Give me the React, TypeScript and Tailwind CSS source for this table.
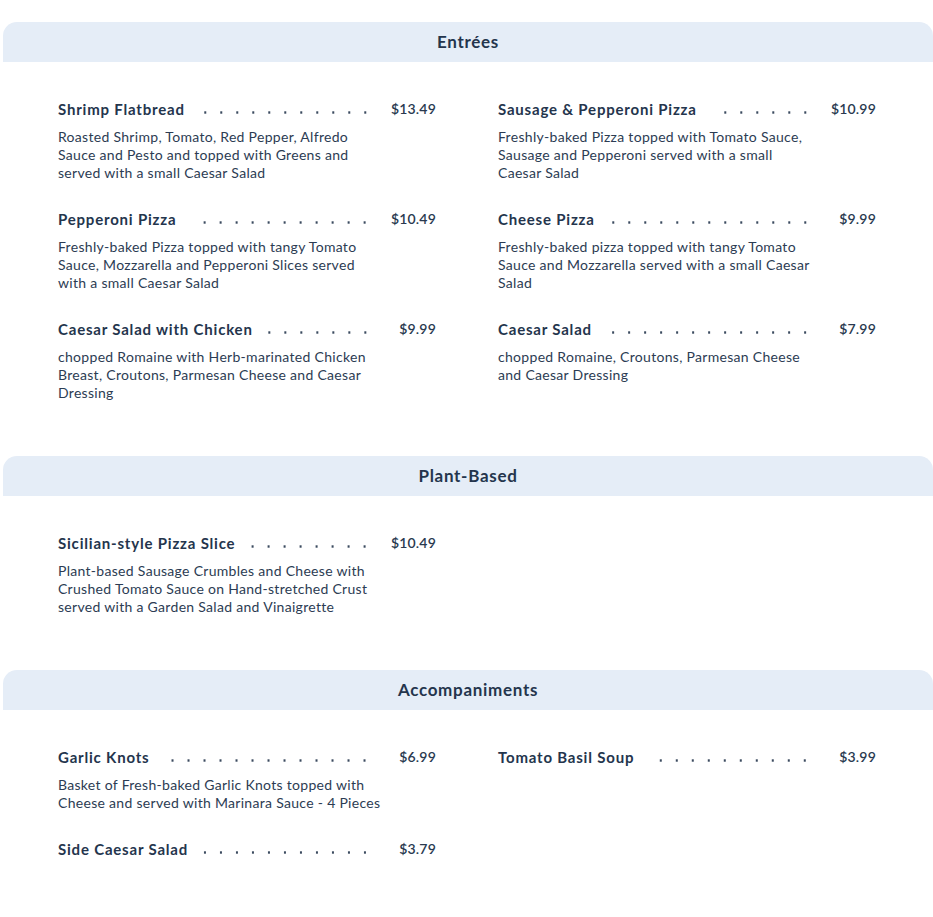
type Item = { name: string; price: string; desc?: string };
type Section = { title: string; items: Item[] };

// line breaks follow the printed menu
const sections: Section[] = [
  {
    title: 'Entrées',
    items: [
      {
        name: 'Shrimp Flatbread',
        price: '$13.49',
        desc: 'Roasted Shrimp, Tomato, Red Pepper, Alfredo\nSauce and Pesto and topped with Greens and\nserved with a small Caesar Salad',
      },
      {
        name: 'Sausage & Pepperoni Pizza',
        price: '$10.99',
        desc: 'Freshly-baked Pizza topped with Tomato Sauce,\nSausage and Pepperoni served with a small\nCaesar Salad',
      },
      {
        name: 'Pepperoni Pizza',
        price: '$10.49',
        desc: 'Freshly-baked Pizza topped with tangy Tomato\nSauce, Mozzarella and Pepperoni Slices served\nwith a small Caesar Salad',
      },
      {
        name: 'Cheese Pizza',
        price: '$9.99',
        desc: 'Freshly-baked pizza topped with tangy Tomato\nSauce and Mozzarella served with a small Caesar\nSalad',
      },
      {
        name: 'Caesar Salad with Chicken',
        price: '$9.99',
        desc: 'chopped Romaine with Herb-marinated Chicken\nBreast, Croutons, Parmesan Cheese and Caesar\nDressing',
      },
      {
        name: 'Caesar Salad',
        price: '$7.99',
        desc: 'chopped Romaine, Croutons, Parmesan Cheese\nand Caesar Dressing',
      },
    ],
  },
  {
    title: 'Plant-Based',
    items: [
      {
        name: 'Sicilian-style Pizza Slice',
        price: '$10.49',
        desc: 'Plant-based Sausage Crumbles and Cheese with\nCrushed Tomato Sauce on Hand-stretched Crust\nserved with a Garden Salad and Vinaigrette',
      },
    ],
  },
  {
    title: 'Accompaniments',
    items: [
      {
        name: 'Garlic Knots',
        price: '$6.99',
        desc: 'Basket of Fresh-baked Garlic Knots topped with\nCheese and served with Marinara Sauce - 4 Pieces',
      },
      { name: 'Tomato Basil Soup', price: '$3.99' },
      { name: 'Side Caesar Salad', price: '$3.79' },
    ],
  },
];

function MenuItem({ item }: { item: Item }) {
  return (
    <div>
      <div className="flex items-end">
        <span className="text-[15px] leading-[22px] font-bold tracking-[0.8px] text-[#24354d]">
          {item.name}
        </span>
        <span className="flex-1 ml-[14px] mb-[6px] h-[3px] bg-[radial-gradient(circle,#3b4a5f_1px,transparent_1.4px)] bg-[length:16px_3px] bg-repeat-x bg-right" />
        <span className="w-[63px] shrink-0 text-right text-[14px] leading-[22px] font-semibold tracking-[0.2px] text-[#2a3a50]">
          {item.price}
        </span>
      </div>
      {item.desc && (
        <p className="mt-[8px] whitespace-pre-line text-[14px] leading-[18px] tracking-[0.3px] text-[#2c3c53]">
          {item.desc}
        </p>
      )}
    </div>
  );
}

export default function App() {
  return (
    <div className="w-[933px] bg-white pt-[22px] font-['Lato',sans-serif]">
      {sections.map((s) => (
        <section key={s.title}>
          <div className="ml-[3px] h-[40px] flex items-center justify-center rounded-t-[14px] bg-[#e5edf7]">
            <h2 className="text-[17px] font-bold tracking-[0.7px] text-[#24354d]">{s.title}</h2>
          </div>
          <div className="grid grid-cols-2 gap-x-[62px] gap-y-[26px] pl-[58px] pr-[57px] pt-[36px] pb-[54px]">
            {s.items.map((it) => (
              <MenuItem key={it.name} item={it} />
            ))}
          </div>
        </section>
      ))}
    </div>
  );
}
